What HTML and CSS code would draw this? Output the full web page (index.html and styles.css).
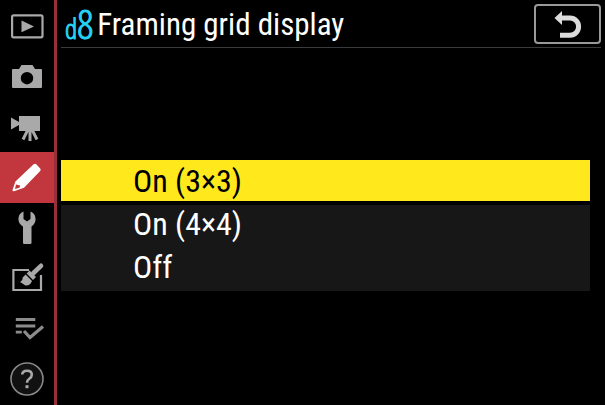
FILE: index.html
```html
<!DOCTYPE html>
<html lang="en">
<head>
  <meta charset="UTF-8">
  <meta name="viewport" content="width=device-width, initial-scale=1.0">
  <title>Framing grid display</title>
  <link rel="stylesheet" href="styles.css">
</head>
<body>

  <nav class="tabs" aria-label="Menus">
    <button type="button" class="tab" aria-label="Playback">
      <svg class="icon" viewBox="0 0 40 40">
        <rect x="5.1" y="10.3" width="30.4" height="22" rx="1.5" fill="none" stroke="currentColor" stroke-width="2.2"/>
        <path d="M14.5 15.5L27 21.4L14.5 27.3Z" fill="currentColor"/>
      </svg>
    </button>
    <button type="button" class="tab" aria-label="Photo shooting">
      <svg class="icon" viewBox="0 0 40 40">
        <path fill="currentColor" fill-rule="evenodd" d="M6 13H12L14.5 9H25.5L28 13H34Q35 13 35 14V31Q35 32 34 32H6Q5 32 5 31V14Q5 13 6 13ZM20 16A6.2 6.2 0 1 0 20 28.4A6.2 6.2 0 1 0 20 16Z"/>
      </svg>
    </button>
    <button type="button" class="tab" aria-label="Movie shooting">
      <svg class="icon" viewBox="0 0 40 40">
        <path fill="currentColor" d="M4 10.5L12 15V9H33V24H12V18L4 22.5Z"/>
        <path d="M23 23V34M20.5 23.5L16 32.5M25.5 23.5L30 32.5" fill="none" stroke="currentColor" stroke-width="3"/>
      </svg>
    </button>
    <button type="button" class="tab active" aria-label="Custom settings">
      <svg class="icon" viewBox="0 0 40 40">
        <path fill="currentColor" fill-rule="evenodd" d="M26.6 7.3Q28 6 29.3 7.3L33.2 11.5Q34.2 12.7 33.2 13.9L17 30.8L7 34.2Q5.2 34.8 5.5 33L8.4 24.6ZM9 27.5L8 32L12.4 30.8L13.2 28.6Z"/>
      </svg>
    </button>
    <button type="button" class="tab" aria-label="Setup">
      <svg class="icon" viewBox="0 0 40 40">
        <path fill="currentColor" d="M16.5 3.5V11L20 13.5L23.5 11V3.5Q28.6 5.5 28.6 11Q28.6 16 24.5 18.5V34.8Q24.5 36 23.3 36H17.2Q16 36 16 34.8V18.5Q11.4 16 11.4 11Q11.4 5.5 16.5 3.5Z"/>
      </svg>
    </button>
    <button type="button" class="tab" aria-label="Retouch">
      <svg class="icon" viewBox="0 0 40 40">
        <path d="M22 12H6.4V32H34V17" fill="none" stroke="currentColor" stroke-width="2.2"/>
        <path d="M26.5 15L34 7.8" stroke="currentColor" stroke-width="4.6" stroke-linecap="round"/>
        <path fill="currentColor" d="M22.6 12.6L29 19L26 22L19.6 15.6ZM18.6 16.6L25 23Q23 28 18.4 27.5Q16 25.8 13 24Q16 22.2 15.6 19.6Z"/>
      </svg>
    </button>
    <button type="button" class="tab dim" aria-label="My menu">
      <svg class="icon" viewBox="0 0 40 40">
        <path d="M8.8 10.5H28.3M8.8 17H28.3M8.8 23.2H14.8" stroke="currentColor" stroke-width="2.8"/>
        <path d="M17 22L23 28.5L36 17.5" fill="none" stroke="currentColor" stroke-width="3.2"/>
      </svg>
    </button>
    <button type="button" class="tab" aria-label="Help">
      <svg class="icon" viewBox="0 0 40 40">
        <circle cx="20" cy="19" r="16" fill="#111" stroke="#888" stroke-width="1.6"/>
        <path d="M15.2 14.5Q15.5 10.8 20 10.8Q24.8 10.8 24.8 14.7Q24.8 17 22.3 18.7Q20 20.2 20 22.8" fill="none" stroke="currentColor" stroke-width="2.6"/>
        <rect x="18.5" y="25.2" width="3" height="3" fill="currentColor"/>
      </svg>
    </button>
  </nav>

  <main class="screen">
    <header class="header">
      <h1 class="title"><span class="code">d<span class="digit">8</span></span><span>Framing grid display</span></h1>
      <button type="button" class="back" aria-label="Back">
        <svg class="back-icon" viewBox="0 0 40 30">
          <path d="M13 9H22A8.6 8.6 0 0 1 22 26.2H12" fill="none" stroke="currentColor" stroke-width="5"/>
          <path d="M6.5 9L14 2V16Z" fill="currentColor"/>
        </svg>
      </button>
    </header>

    <div class="options">
      <button type="button" class="option selected">On (3×3)</button>
      <button type="button" class="option">On (4×4)</button>
      <button type="button" class="option">Off</button>
    </div>
  </main>

</body>
</html>
```

FILE: styles.css
```css
* {
  box-sizing: border-box;
}

body {
  display: flex;
  min-height: 100vh;
  margin: 0;
  background-color: #000;
  color: #fff;
  font-family: "Roboto Condensed", "Open Sans Condensed", sans-serif;
}

button {
  margin: 0;
  padding: 0;
  border: none;
  background: none;
  color: inherit;
  font: inherit;
  cursor: pointer;
}

.tabs {
  display: grid;
  grid-template-rows: repeat(8, 1fr);
  width: 57px;
  border-right: 3px solid #98303a;
}

.tab {
  display: flex;
  align-items: center;
  justify-content: center;
  color: #a9a9a9;
}

.tab.active {
  background-color: #c1373d;
  color: #fff;
}

.tab.dim {
  color: #8c8c8c;
}

.icon {
  width: 40px;
  height: 40px;
}

.screen {
  flex: 1;
  padding: 0 4px;
}

.header {
  display: flex;
  align-items: center;
  justify-content: space-between;
  height: 48px;
  border-bottom: 1px solid #3a3a3a;
}

.title {
  display: flex;
  align-items: center;
  gap: 4px;
  margin: 0;
  padding: 2px 0 0 4px;
  font-size: 31px;
  font-weight: normal;
  line-height: 40px;
  white-space: nowrap;
}

.code {
  color: #28d2f5;
  font-family: "Open Sans Condensed Light", "Roboto Condensed", sans-serif;
  font-size: 28px;
  font-weight: 300;
  -webkit-text-stroke: 1px currentColor;
}

.digit {
  font-size: 40px;
  line-height: 44px;
}

.back {
  display: flex;
  align-items: center;
  justify-content: center;
  width: 67px;
  height: 40px;
  border: 2px solid #999;
  border-radius: 4px;
  color: #dcdcdc;
}

.back-icon {
  width: 40px;
  height: 30px;
}

.options {
  margin: 112px 11px 0 0;
  background-color: #171717;
}

.option {
  display: block;
  width: 100%;
  height: 43px;
  padding: 0 0 6px 72px;
  font-size: 32px;
  line-height: 36px;
  text-align: left;
}

.option.selected {
  height: 45px;
  padding-bottom: 0;
  border-bottom: 4px solid #000;
  background-color: #ffe91c;
  color: #000;
}
```
